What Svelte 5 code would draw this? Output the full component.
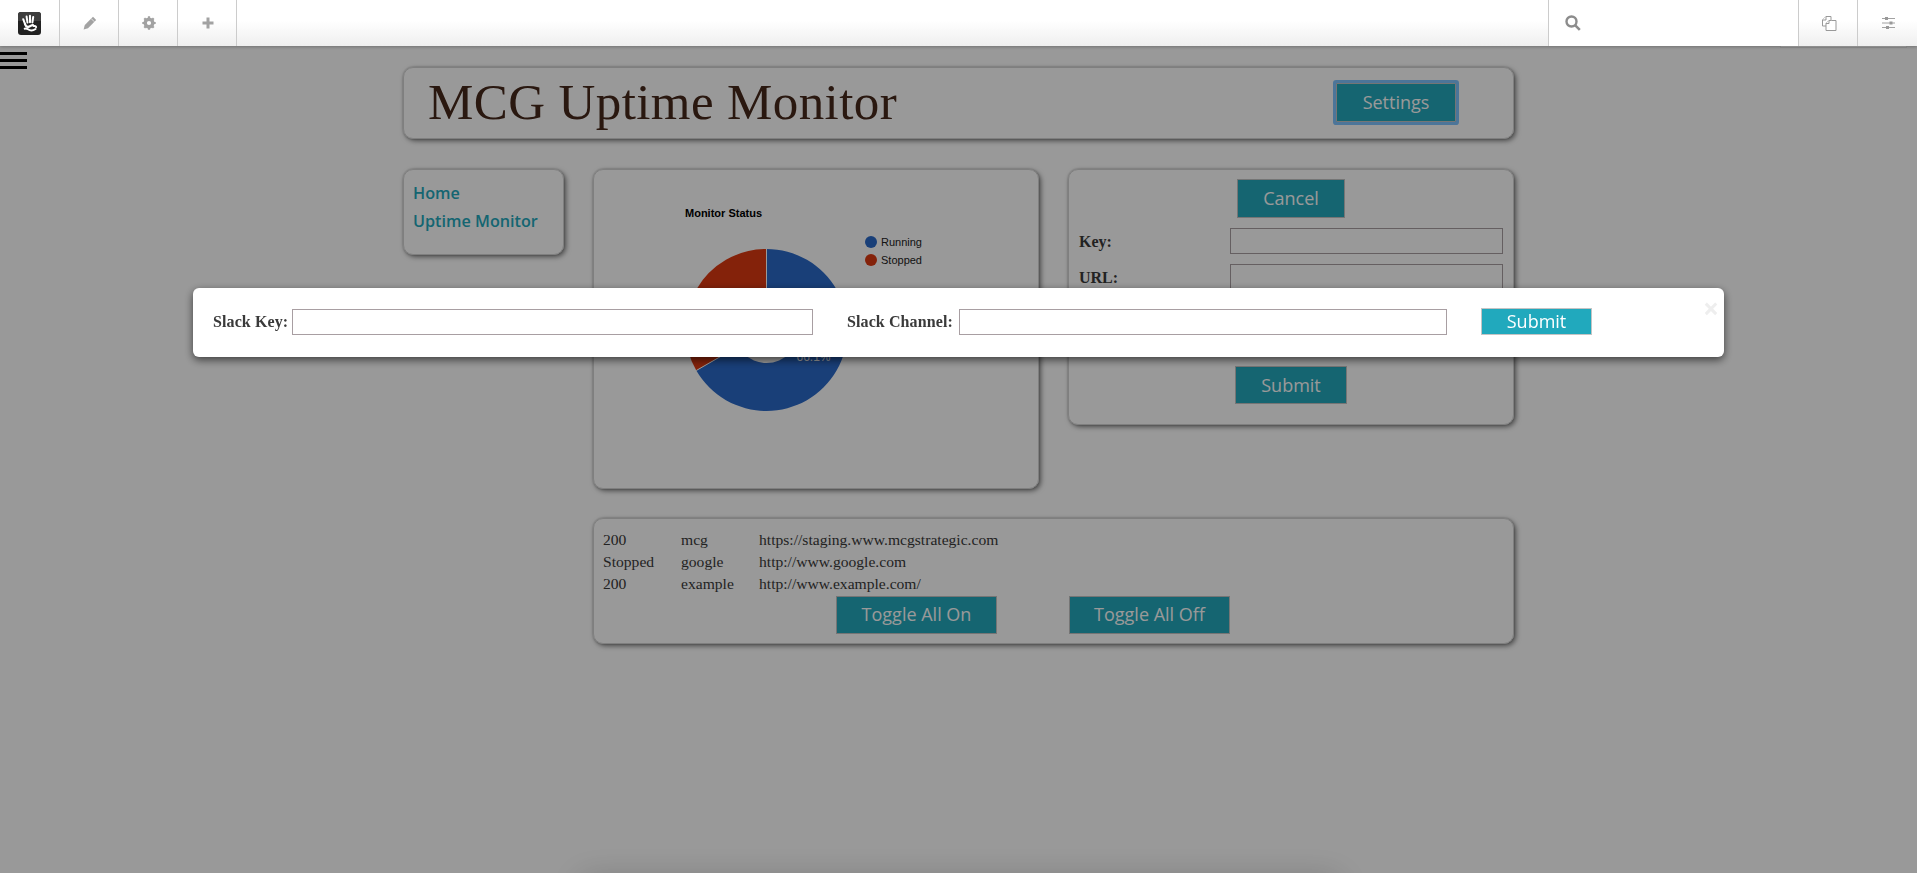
<script>
	const nav = ['Home', 'Uptime Monitor'];

	const monitors = [
		{ status: '200', name: 'mcg', url: 'https://staging.www.mcgstrategic.com' },
		{ status: 'Stopped', name: 'google', url: 'http://www.google.com' },
		{ status: '200', name: 'example', url: 'http://www.example.com/' },
	];

	const fields = ['Key:', 'URL:', 'Name:'];
</script>

<header class="topbar">
	<div class="cell first">
		<svg width="23" height="23" viewBox="0 0 23 23">
			<rect width="23" height="23" rx="3" fill="#222" />
			<path d="M0 3a3 3 0 0 1 3-3h17a3 3 0 0 1 3 3v6H0z" fill="#3d3d3d" />
			<g fill="none" stroke="#fff" stroke-linecap="round">
				<path d="M5.200 7.200l1.800 4.600M8.600 4.600l.9 6M12 3.800v6.500M15.200 5l-.8 5.400" stroke-width="2" />
				<path d="M7 12c.6 2 1.800 3 3.200 2.800 1.500-.2 3-1.500 4.800-1.800" stroke-width="2.200" />
				<path d="M17.500 17c-2.200 1.500-5.500 1.700-7.500.3-1-.7-2.200-1-3.300-.6M15.500 14c1.500-.3 2.500.3 2.600 1.200" stroke-width="2" />
			</g>
		</svg>
	</div>
	<div class="cell">
		<svg width="14" height="14" viewBox="0 0 14 14">
			<path d="M10 .8l3.200 3.200-8.200 8.200-4.400 1.200 1.200-4.400z" fill="#a2a2a2" />
			<path d="M8.200 2.600l3.200 3.200" stroke="#f4f4f4" stroke-width=".8" />
		</svg>
	</div>
	<div class="cell">
		<svg width="14" height="14" viewBox="0 0 14 14">
			<circle cx="7" cy="7" r="3.800" fill="none" stroke="#a2a2a2" stroke-width="3.400" />
			<path d="M7 .3v2.500M7 11.200v2.500M.3 7h2.500M11.200 7h2.500M2.300 2.300l1.700 1.700M10 10l1.700 1.700M11.700 2.300L10 4M4 10l-1.700 1.700" stroke="#a2a2a2" stroke-width="2.200" />
		</svg>
	</div>
	<div class="cell">
		<svg width="12" height="12" viewBox="0 0 12 12">
			<path d="M6 .5v11M.5 6h11" stroke="#a2a2a2" stroke-width="3" />
		</svg>
	</div>

	<div class="bar-fill"></div>

	<div class="search">
		<svg width="16" height="16" viewBox="0 0 16 16">
			<circle cx="6.500" cy="6.500" r="5" fill="none" stroke="#8c8c8c" stroke-width="2.400" />
			<path d="M10.300 10.300l4.500 4.500" stroke="#8c8c8c" stroke-width="2.600" />
		</svg>
	</div>
	<div class="cell right">
		<svg width="15" height="15" viewBox="0 0 15 15" fill="#fff" stroke="#999">
			<path d="M4 .5h5v9.500H.5V4z" />
			<path d="M9.500 4.500h-2.500l-3 3v7h10v-10z" />
			<path d="M4 .5v3.500H.5M7 4.500v3h-3" />
		</svg>
	</div>
	<div class="cell right last">
		<svg width="13" height="12" viewBox="0 0 13 12">
			<path d="M0 1.500h13M0 6h13M0 10.500h13" stroke="#a2a2a2" />
			<path d="M3 0h3v3H3zM7.500 4.500h3v3h-3zM4 9h3v3H4z" fill="#999" />
		</svg>
	</div>
</header>

<div class="peek"></div>
<div class="burger"><span></span><span></span><span></span></div>

<main class="page">
	<section class="card title-card">
		<h1>MCG Uptime Monitor</h1>
		<button class="btn focused">Settings</button>
	</section>

	<div class="grid">
		<nav class="card sidebar">
			{#each nav as item}
				<a href="#top">{item}</a>
			{/each}
		</nav>

		<section class="card chart">
			<svg width="444" height="318" viewBox="0 0 444 318">
				<text x="91" y="47" class="chart-title">Monitor Status</text>
				<circle cx="277" cy="72" r="6" fill="#2a69c9" />
				<text x="287" y="76" class="chart-label">Running</text>
				<circle cx="277" cy="90" r="6" fill="#dc3912" />
				<text x="287" y="94" class="chart-label">Stopped</text>
				<path d="M172.500 160V79A81 81 0 1 1 102.300 200.500z" fill="#2a69c9" />
				<path d="M172.500 160L102.300 200.500A81 81 0 0 1 172.500 79z" fill="#dc3912" />
				<path d="M172.500 79V160L102.300 200.500" fill="none" stroke="#fff" />
				<circle cx="172.500" cy="160" r="33" fill="#fff" />
				<text x="219.500" y="191" class="chart-pct">66.1%</text>
			</svg>
		</section>

		<section class="card form">
			<button class="btn cancel">Cancel</button>
			{#each fields as field}
				<div class="row">
					<label for={field}>{field}</label>
					<input id={field} type="text" />
				</div>
			{/each}
			<button class="btn submit">Submit</button>
		</section>

		<section class="card table">
			{#each monitors as m}
				<div class="monitor">
					<span>{m.status}</span>
					<span>{m.name}</span>
					<span>{m.url}</span>
				</div>
			{/each}
			<div class="toggles">
				<button class="btn toggle">Toggle All On</button>
				<button class="btn toggle">Toggle All Off</button>
			</div>
		</section>
	</div>
</main>

<div class="below-fold"></div>
<div class="overlay"></div>

<div class="modal">
	<label for="slack-key">Slack Key:</label>
	<input id="slack-key" type="text" />
	<label for="slack-channel">Slack Channel:</label>
	<input id="slack-channel" type="text" />
	<button class="btn modal-submit">Submit</button>
	<span class="close">×</span>
</div>

<style>
	:global(body) {
		background: #fff;
		font-family: 'Liberation Serif', serif;
		color: #3a3a3a;
	}

	.topbar {
		position: relative;
		z-index: 20;
		display: flex;
		height: 46px;
		background: linear-gradient(#fff 45%, #efefef);
		box-shadow: 0 1px 3px rgba(0, 0, 0, 0.25);
	}

	.cell {
		width: 56px;
		flex: none;
		display: flex;
		align-items: center;
		justify-content: center;
		padding-left: 2px;
		border-right: 1px solid #ccc;
	}

	.cell.first {
		width: 59px;
		padding-left: 0;
	}

	.cell.right {
		border-right: none;
		border-left: 1px solid #ccc;
	}

	.cell.last {
		width: 57px;
	}

	.bar-fill {
		flex: 1;
	}

	.search {
		width: 250px;
		flex: none;
		display: flex;
		align-items: center;
		padding-left: 16px;
		box-sizing: border-box;
		background: #fff;
		border-left: 1px solid #ccc;
	}

	.peek {
		position: fixed;
		z-index: 25;
		top: 46px;
		left: 1780px;
		width: 127px;
		height: 2px;
		box-sizing: border-box;
		border: 1px solid #808080;
		border-top: none;
		background: #8e8e8e;
	}

	.burger {
		position: absolute;
		z-index: 15;
		top: 52px;
		left: 0;
		width: 27px;
		display: flex;
		flex-direction: column;
		gap: 4px;
	}

	.burger span {
		height: 3px;
		background: #000;
	}

	.page {
		width: 1111px;
		margin: 21px auto 0;
		padding-bottom: 40px;
	}

	.card {
		box-sizing: border-box;
		border: 1px solid #d4d4d4;
		border-radius: 10px;
		box-shadow: 2px 2px 5px rgba(0, 0, 0, 0.5), 0 0 2px rgba(0, 0, 0, 0.3);
	}

	.title-card {
		height: 72px;
		display: flex;
		align-items: center;
		justify-content: space-between;
		padding: 0 57px 0 24px;
	}

	h1 {
		margin: -2px 0 0;
		font-size: 51px;
		font-weight: 400;
		line-height: 1;
		color: #46291b;
		letter-spacing: 0.4px;
	}

	.btn {
		box-sizing: border-box;
		padding: 0 0 2px;
		border: 1px solid #c4c4c4;
		background: #23a9bd;
		color: #fff;
		font-family: 'Open Sans', sans-serif;
		font-size: 18px;
		cursor: pointer;
	}

	.focused {
		width: 120px;
		height: 39px;
		margin-top: -1px;
		border-radius: 1px;
		box-shadow: 0 0 0 3px #7fc4ff;
	}

	.grid {
		display: grid;
		grid-template-columns: 161px 446px 446px;
		grid-template-rows: 320px auto;
		gap: 29px;
		margin-top: 30px;
	}

	.sidebar {
		height: 86px;
		padding: 11px 9px 0;
		display: flex;
		flex-direction: column;
		gap: 4px;
	}

	.sidebar a {
		font-family: 'Open Sans', sans-serif;
		font-size: 16.200px;
		font-weight: 600;
		line-height: 24px;
		color: #23a9bd;
		text-decoration: none;
	}

	.chart-title {
		font: bold 11px 'Liberation Sans', sans-serif;
		fill: #000;
	}

	.chart-label {
		font: 11px 'Liberation Sans', sans-serif;
		fill: #222;
	}

	.chart-pct {
		font: 12px 'Liberation Sans', sans-serif;
		fill: #fff;
		text-anchor: middle;
	}

	.form {
		height: 256px;
		padding: 9px 10px 0;
		display: flex;
		flex-direction: column;
		align-items: center;
	}

	.cancel {
		width: 108px;
		height: 39px;
		flex: none;
		margin-bottom: 10px;
	}

	.row {
		align-self: stretch;
		height: 26px;
		margin-bottom: 10px;
		display: flex;
		align-items: center;
		justify-content: space-between;
		font-size: 16px;
		font-weight: 700;
	}

	.row label {
		padding-top: 2px;
	}

	input {
		box-sizing: border-box;
		height: 26px;
		border: 1px solid #a89ea2;
		background: #fff;
		border-radius: 0;
		padding: 0;
	}

	.row input {
		width: 273px;
	}

	.submit {
		width: 112px;
		height: 38px;
		flex: none;
		margin-top: 30px;
		padding-bottom: 0;
	}

	.table {
		grid-column: 2 / 4;
		height: 126px;
		padding: 10px 9px 0;
	}

	.monitor {
		display: grid;
		grid-template-columns: 78px 78px 1fr;
		height: 22px;
		align-items: center;
		font-size: 15.600px;
		line-height: 22px;
	}

	.toggles {
		display: flex;
		justify-content: center;
		gap: 72px;
		margin-top: 1px;
		padding-right: 41px;
	}

	.toggle {
		width: 161px;
		height: 38px;
	}

	.below-fold {
		position: fixed;
		top: 880px;
		left: 580px;
		width: 760px;
		height: 20px;
		box-shadow: 0 0 34px rgba(0, 0, 0, 0.25);
	}

	.overlay {
		position: fixed;
		inset: 0;
		z-index: 10;
		background: rgba(0, 0, 0, 0.4);
	}

	.modal {
		position: fixed;
		z-index: 30;
		top: 288px;
		left: 193px;
		width: 1531px;
		height: 69px;
		box-sizing: border-box;
		padding: 0 0 2px 20px;
		display: grid;
		grid-template-columns: 79px 521px 34px 112px 488px 34px 111px;
		align-items: center;
		background: #fff;
		border-radius: 6px;
		box-shadow: 0 3px 9px rgba(0, 0, 0, 0.6);
		font-size: 16px;
		font-weight: 700;
		letter-spacing: 0.1px;
	}

	.modal label:nth-of-type(2) {
		grid-column: 4;
	}

	.modal-submit {
		grid-column: 7;
		height: 27px;
		letter-spacing: 0;
		background: #21a9bd;
	}

	.close {
		position: absolute;
		top: 7px;
		right: 5px;
		font-family: 'Open Sans', sans-serif;
		font-size: 28px;
		font-weight: 700;
		line-height: 26px;
		color: #eee;
	}
</style>
